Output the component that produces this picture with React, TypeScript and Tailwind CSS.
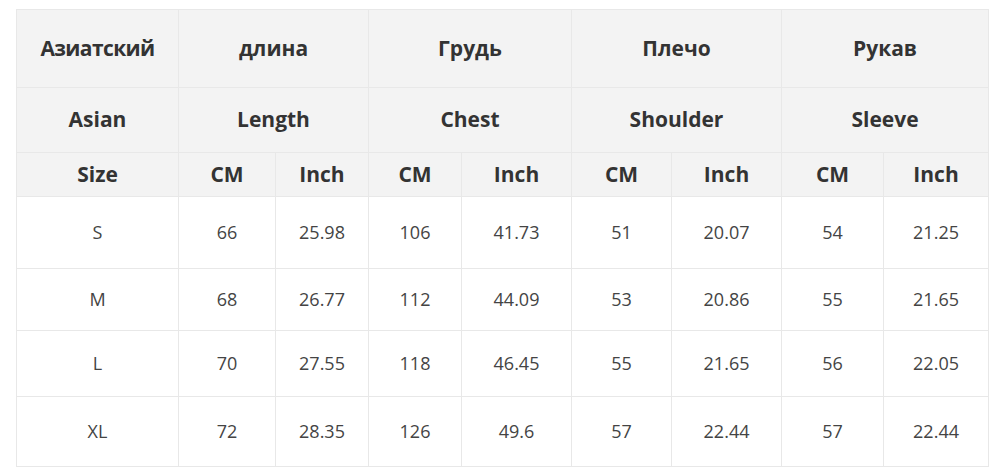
import React from "react";

const widths = [162, 97, 93, 93, 110, 100, 110, 102, 105];
const rows = [
  ["S", "66", "25.98", "106", "41.73", "51", "20.07", "54", "21.25"],
  ["M", "68", "26.77", "112", "44.09", "53", "20.86", "55", "21.65"],
  ["L", "70", "27.55", "118", "46.45", "55", "21.65", "56", "22.05"],
  ["XL", "72", "28.35", "126", "49.6", "57", "22.44", "57", "22.44"],
];
const rowH = ["h-[72px]", "h-[62px]", "h-[66px]", "h-[70px]"];

export default function App() {
  const th = "border border-[#e8e8e8] bg-[#f3f3f3] text-center font-bold text-[21px] text-[#333] p-0";
  const td = "border border-[#e8e8e8] bg-white text-center text-[18px] text-[#444] p-0";
  return (
    <div className="w-[1000px] h-[474px] bg-white pt-[9px] pl-[16px]" style={{ fontFamily: '"Open Sans", "Noto Sans", sans-serif' }}>
      <table className="border-collapse table-fixed w-[972px]">
        <colgroup>
          {widths.map((w, i) => (
            <col key={i} style={{ width: w }} />
          ))}
        </colgroup>
        <tbody>
          <tr className="h-[78px]">
            <td className={th + " text-[20px] tracking-[-0.6px]"}>Азиатский</td>
            <td className={th} colSpan={2}>длина</td>
            <td className={th} colSpan={2}>Грудь</td>
            <td className={th} colSpan={2}>Плечо</td>
            <td className={th} colSpan={2}>Рукав</td>
          </tr>
          <tr className="h-[65px]">
            <td className={th}>Asian</td>
            <td className={th} colSpan={2}>Length</td>
            <td className={th} colSpan={2}>Chest</td>
            <td className={th} colSpan={2}>Shoulder</td>
            <td className={th} colSpan={2}>Sleeve</td>
          </tr>
          <tr className="h-[44px]">
            <td className={th}>Size</td>
            <td className={th}>CM</td>
            <td className={th}>Inch</td>
            <td className={th}>CM</td>
            <td className={th}>Inch</td>
            <td className={th}>CM</td>
            <td className={th}>Inch</td>
            <td className={th}>CM</td>
            <td className={th}>Inch</td>
          </tr>
          {rows.map((r, i) => (
            <tr key={i} className={rowH[i]}>
              {r.map((c, j) => (
                <td key={j} className={td}>{c}</td>
              ))}
            </tr>
          ))}
        </tbody>
      </table>
    </div>
  );
}
